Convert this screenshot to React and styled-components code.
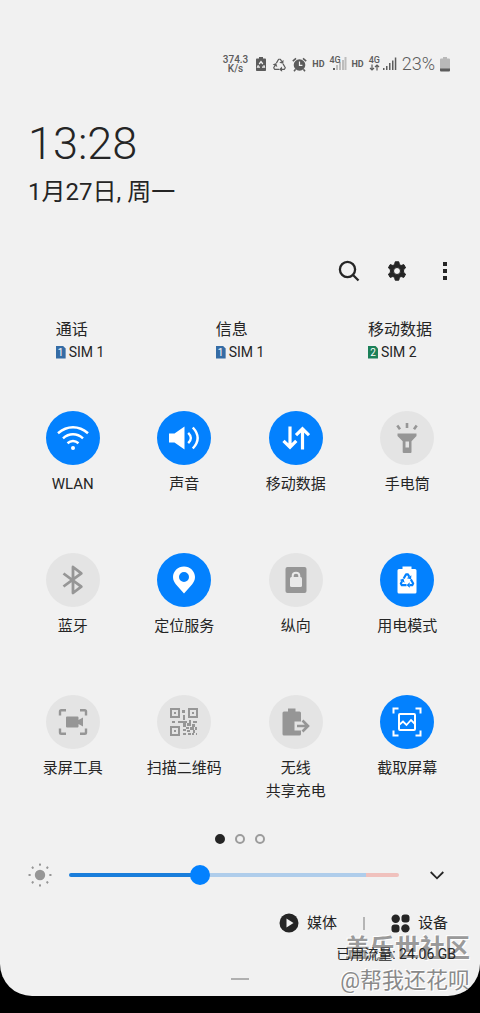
import React, { useState } from 'react';
import styled, { createGlobalStyle } from 'styled-components';

const Global = createGlobalStyle`
  * { box-sizing: border-box; }
  html, body { margin: 0; padding: 0; background: #000; }
  body {
    font-family: Roboto, "Noto Sans CJK SC", sans-serif;
    color: #252525;
  }
  button {
    border: 0; padding: 0; margin: 0; background: none;
    font: inherit; color: inherit; cursor: pointer;
  }
  svg { display: block; flex: none; }
`;

const Panel = styled.main`
  position: relative;
  display: flex;
  flex-direction: column;
  background: #f1f1f1;
  border-radius: 0 0 32px 32px;
  padding: 50px 0 16px;
  overflow: hidden;
`;

const StatusBar = styled.div`
  display: flex;
  justify-content: flex-end;
  align-items: center;
  gap: 5px;
  height: 28px;
  padding-right: 30px;
  color: #5c5c5c;
`;

const Speed = styled.div`
  padding-right: 2px;
  font-size: 10px;
  line-height: 9px;
  font-weight: 500;
  text-align: center;
`;

const Tag = styled.span`
  font-size: 9px;
  line-height: 12px;
  font-weight: 700;
`;

const Signal = styled.div`
  position: relative;
  display: flex;
  align-items: flex-end;
  width: ${p => p.$width}px;
  height: 16px;
`;

const NetType = styled.span`
  position: absolute;
  left: 0;
  top: 0;
  font-size: 9px;
  line-height: 9px;
  font-weight: 500;
`;

const Percent = styled.span`
  font-size: 18px;
  line-height: 20px;
  font-weight: 300;
`;

const Clock = styled.time`
  display: block;
  margin-top: 40px;
  padding-left: 28px;
  font-size: 45px;
  line-height: 52px;
  font-weight: 300;
`;

const DateText = styled.div`
  margin-top: 6px;
  padding-left: 28px;
  font-size: 24px;
  line-height: 32px;
`;

const Toolbar = styled.div`
  display: flex;
  justify-content: flex-end;
  gap: 16px;
  margin-top: 47px;
  padding-right: 19px;
`;

const IconButton = styled.button`
  display: flex;
  align-items: center;
  justify-content: center;
  width: ${p => p.$width || 32}px;
  height: 32px;
`;

const SimRow = styled.section`
  display: grid;
  grid-template-columns: repeat(3, 1fr);
  justify-items: center;
  margin-top: 31px;
`;

const SimTitle = styled.div`
  font-size: 16px;
  line-height: 23px;
`;

const SimName = styled.div`
  display: flex;
  align-items: center;
  gap: 3px;
  font-size: 14px;
  line-height: 22px;
`;

const SimBadge = styled.span`
  display: block;
  width: 10px;
  height: 13px;
  font-size: 10px;
  line-height: 13px;
  text-align: center;
  color: #fff;
  background: ${p => p.$color};
  clip-path: polygon(0 0, 7px 0, 100% 3px, 100% 100%, 0 100%);
`;

const Tiles = styled.section`
  display: grid;
  grid-template-columns: repeat(4, 1fr);
  row-gap: 57px;
  margin-top: 48px;
  padding: 0 17px;
`;

const Tile = styled.button`
  display: flex;
  flex-direction: column;
  align-items: center;
  gap: 8px;
  font-size: 15px;
  line-height: 23px;
  white-space: pre-line;
`;

const Disc = styled.span`
  display: flex;
  align-items: center;
  justify-content: center;
  width: 54px;
  height: 54px;
  border-radius: 50%;
  background: ${p => (p.$on ? '#0381fe' : '#e4e4e4')};
  color: ${p => (p.$on ? '#fff' : '#969696')};
`;

const Dots = styled.div`
  display: flex;
  justify-content: center;
  gap: 10px;
  margin-top: 31px;
`;

const Dot = styled.span`
  width: 10px;
  height: 10px;
  border-radius: 50%;
  border: 2px solid ${p => (p.$active ? '#252525' : '#9c9c9c')};
  background: ${p => (p.$active ? '#252525' : 'transparent')};
`;

const Brightness = styled.div`
  display: flex;
  align-items: center;
  gap: 17px;
  height: 40px;
  margin-top: 11px;
  padding: 0 22px 0 28px;
`;

const Slider = styled.input`
  appearance: none;
  flex: 1;
  min-width: 0;
  height: 20px;
  margin: 0;
  background: transparent;
  &::-webkit-slider-runnable-track {
    height: 4px;
    border-radius: 2px;
    background: linear-gradient(
      to right,
      #1a7edb 0 var(--fill),
      #afcdeb var(--fill) 90%,
      #f0c1bd 90%
    );
  }
  &::-webkit-slider-thumb {
    appearance: none;
    width: 20px;
    height: 20px;
    margin-top: -8px;
    border-radius: 50%;
    background: #0381fe;
  }
`;

const Footer = styled.div`
  display: flex;
  justify-content: flex-end;
  align-items: center;
  gap: 26px;
  height: 30px;
  margin-top: 13px;
  padding-right: 32px;
`;

const FooterButton = styled.button`
  display: flex;
  align-items: center;
  gap: 8px;
  font-size: 15px;
  line-height: 23px;
`;

const Divider = styled.span`
  width: 2px;
  height: 13px;
  background: #b5b5b5;
`;

const Usage = styled.div`
  position: relative;
  z-index: 1;
  margin-top: 6px;
  padding-right: 24px;
  font-size: 14px;
  line-height: 20px;
  text-align: right;
`;

const Handle = styled.div`
  align-self: center;
  width: 18px;
  height: 2px;
  margin-top: 14px;
  background: #b0b0b0;
`;

const Watermark = styled.div`
  position: absolute;
  right: 10px;
  bottom: 0;
  text-align: right;
  white-space: nowrap;
  pointer-events: none;
  text-shadow: -1px -1px 0 #fff, 1px 1px 0 #fff;
`;

const Forum = styled.div`
  font-size: 25px;
  line-height: 34px;
  font-weight: 700;
  color: #9a9a9a;
`;

const Author = styled.div`
  font-size: 22px;
  line-height: 30px;
  color: #8a8a8a;
`;

const Recycle = ({ size, color, width = 2.6 }) => (
  <svg width={size} height={size} viewBox="0 0 24 24">
    {[0, 120, 240].map(a => (
      <g key={a} transform={`rotate(${a} 12 13.500)`}>
        <path d="M7 9.800 10.600 3.600H13.400L15.400 7" fill="none" stroke={color} strokeWidth={width} strokeLinejoin="round" />
        <path d="M11.600 9.200 18 10.800 18.600 4.800z" fill={color} />
      </g>
    ))}
  </svg>
);

const SaverIcon = () => (
  <svg width="12" height="16" viewBox="0 0 12 16">
    <path d="M4 1h4v1.500h2.200Q11 2.500 11 3.500v10.700Q11 15 10.200 15H1.800Q1 15 1 14.200V3.500Q1 2.500 1.800 2.500H4z" fill="currentColor" />
    <path d="M4.200 8 6 5.600 7.800 8M8.800 9.200 9.400 11.200H7M5 11.200H2.600L3.400 9.200" fill="none" stroke="#f1f1f1" strokeWidth="1.300" />
  </svg>
);

const AlarmIcon = () => (
  <svg width="15" height="15" viewBox="0 0 15 15">
    <circle cx="7.500" cy="8" r="5.800" fill="currentColor" />
    <path d="M.8 4.200 4 1.300M14.200 4.200 11 1.300M3.600 12.300 2 14.200M11.400 12.300 13 14.200" stroke="currentColor" strokeWidth="1.600" />
    <path d="M7.500 4.600V8.300H10.400" fill="none" stroke="#f1f1f1" strokeWidth="1.200" />
  </svg>
);

const WeakBars = () => (
  <svg width="17" height="16" viewBox="0 0 17 16">
    <path d="M3 12h2v2H3z" fill="currentColor" />
    <path d="M6 9h2v5H6zM9 6h2v8H9zM12 4h2v10h-2zM14.500 1h2v13h-2z" fill="#bdbdbd" />
  </svg>
);

const StrongBars = () => (
  <svg width="28" height="16" viewBox="0 0 28 16">
    <path d="M3 8.500V14M1 12 3 14 5 12M8 14.500V9M6 11 8 9 10 11" fill="none" stroke="currentColor" strokeWidth="1.200" />
    <path d="M14 12h1.500v2H14zM17 10h1.500v4H17zM20 7h1.500v7H20zM23 4.500h1.500V14H23zM25.800 1.500h1.500V14h-1.500z" fill="currentColor" />
  </svg>
);

const BatteryIcon = () => (
  <svg width="10" height="15" viewBox="0 0 10 15">
    <path d="M3 0h4v1.500h2Q10 1.500 10 2.500V12H0V2.500Q0 1.500 1 1.500h2z" fill="#b9b9b9" />
    <path d="M0 11.500h10V13.500Q10 14.500 9 14.500H1Q0 14.500 0 13.500z" fill="currentColor" />
  </svg>
);

const SearchIcon = () => (
  <svg width="22" height="22" viewBox="0 0 22 22" fill="none" stroke="currentColor">
    <circle cx="9.500" cy="9.500" r="7.600" strokeWidth="2.300" />
    <path d="M15 15 20.500 20.500" strokeWidth="2.300" />
  </svg>
);

const GearIcon = () => (
  <svg width="20" height="20" viewBox="0 0 20 20">
    <path
      fill="currentColor" fillRule="evenodd" stroke="currentColor" strokeWidth="1" strokeLinejoin="round"
      d="M8.200.8h3.600l.6 2.700 1.700 1 2.700-.9 1.800 3.200-2 1.900v2.600l2 1.900-1.800 3.200-2.700-.9-1.700 1-.6 2.700H8.200l-.6-2.700-1.700-1-2.700.9-1.800-3.200 2-1.900V8.700l-2-1.900 1.800-3.200 2.700.9 1.700-1zM10 6.500a3.500 3.500 0 1 0 0 7 3.500 3.500 0 0 0 0-7z"
    />
  </svg>
);

const MoreIcon = () => (
  <svg width="4" height="18" viewBox="0 0 4 18" fill="currentColor">
    <path d="M0 0h4v4H0zM0 7h4v4H0zM0 14h4v4H0z" />
  </svg>
);

const WifiIcon = () => (
  <svg width="32" height="26" viewBox="0 0 32 26" fill="none" stroke="currentColor" strokeWidth="2.500">
    <path d="M1 8.200Q8 2.200 16 2.200T31 8.200M6 13.400Q10.500 9.300 16 9.300T26 13.400M10.500 18.200Q13 16 16 16T21.500 18.200" />
    <circle cx="16" cy="23" r="2" fill="currentColor" stroke="none" />
  </svg>
);

const SoundIcon = () => (
  <svg width="32" height="26" viewBox="0 0 32 26" fill="none" stroke="currentColor" strokeWidth="2.400">
    <path d="M1 8.500H6.500L16.500 1.500V24.500L6.500 17.500H1z" fill="currentColor" stroke="none" />
    <path d="M20.200 7.800Q25.500 13 20.200 18.200M24.800 2.500Q34.500 13 24.800 23.500" />
  </svg>
);

const DataIcon = () => (
  <svg width="28" height="24" viewBox="0 0 28 24" fill="none" stroke="currentColor" strokeWidth="3.200">
    <path d="M8 .5V21M1.500 14.800 8 21.200 14.300 14.800M20.500 23.500V3M14 9.200 20.500 2.800 27 9.200" />
  </svg>
);

const TorchIcon = () => (
  <svg width="24" height="30" viewBox="0 0 24 30">
    <path d="M2.500 10.500H21.500V13L16.500 18.200V29Q16.500 30 15.500 30H8.700Q7.700 30 7.700 29V18.200L2.500 13zM10.500 18.500V24.500H14V18.500z" fill="currentColor" fillRule="evenodd" />
    <path d="M12 0V5M2.300 2.500 5 6.200M21.700 2.500 19 6.200" stroke="currentColor" strokeWidth="2.600" />
  </svg>
);

const BluetoothIcon = () => (
  <svg width="22" height="30" viewBox="0 0 22 30" fill="none" stroke="currentColor" strokeWidth="2.800" strokeLinejoin="round">
    <path d="M1.500 8.500 19.300 21.700 11 28V2L19.300 8.300 1.500 21.500" />
  </svg>
);

const PinIcon = () => (
  <svg width="22" height="28" viewBox="0 0 22 28">
    <path d="M11 .5C5 .5 0 5.200 0 11c0 3 1.300 5.400 3 7.500L11 27.500l8-9c1.700-2.100 3-4.500 3-7.500C22 5.200 17 .5 11 .5zM11 6a5 5 0 1 1 0 10 5 5 0 0 1 0-10z" fill="currentColor" fillRule="evenodd" />
  </svg>
);

const LockIcon = () => (
  <svg width="22" height="28" viewBox="0 0 22 28">
    <rect x=".5" y="1" width="21" height="26" rx="2" fill="currentColor" />
    <rect x="5" y="11" width="12" height="10" rx="1.500" fill="#e9e9e9" />
    <path d="M7.700 12V9.800Q7.700 6.800 11 6.800T14.300 9.800V12" fill="none" stroke="#e9e9e9" strokeWidth="2" />
  </svg>
);

const PowerWrap = styled.span`
  display: grid;
  place-items: center;
  > * { grid-area: 1 / 1; }
`;

const PowerIcon = () => (
  <PowerWrap>
    <svg width="20" height="28" viewBox="0 0 20 28">
      <path d="M5.500.5H14.500V3H18Q19.500 3 19.500 4.500V26Q19.500 27.500 18 27.500H2Q.5 27.500 .5 26V4.500Q.5 3 2 3H5.500z" fill="currentColor" />
    </svg>
    <Recycle size={16} color="#0381fe" width={3.2} />
  </PowerWrap>
);

const RecordIcon = () => (
  <svg width="30" height="28" viewBox="0 0 30 28">
    <path d="M2 7.500V3.500Q2 2.200 3.300 2.200H8M22 2.200H26.700Q28 2.200 28 3.500V7.500M28 20.500V24.500Q28 25.800 26.700 25.800H22M8 25.800H3.300Q2 25.800 2 24.500V20.500" fill="none" stroke="currentColor" strokeWidth="2.400" />
    <path d="M9 8.500H19.500Q20.500 8.500 20.500 9.500V12L25 9.500V18.500L20.500 16V18.500Q20.500 19.500 19.500 19.500H9Q8 19.500 8 18.500V9.500Q8 8.500 9 8.500z" fill="currentColor" />
  </svg>
);

const QrIcon = () => (
  <svg width="28" height="28" viewBox="0 0 28 28" fill="currentColor">
    <path d="M1 1H9V9H1zM19 1H27V9H19zM1 19H9V27H1z" fill="none" stroke="currentColor" strokeWidth="2" />
    <path d="M4 4h2v2H4zM22 4h2v2h-2zM4 22h2v2H4zM12 2h3v3h-3zM13 7h2v5h-2zM2 13h3v2H2zM8 13h9v2H8zM19 12h2v3h-2zM23 13h4v2h-4zM13 15h3v4h-3zM17 15h4v3h-4zM22 16h3v3h-3zM25 19h2v3h-2zM16 19h3v2h-3zM20 19h4v3h-4zM13 21h3v2h-3zM17 22h3v2h-3zM23 22h2v3h-2zM13 25h3v2h-3zM18 25h3v2h-3zM22 25h2v2h-2zM26 25h1v2h-1z" />
  </svg>
);

const ShareIcon = () => (
  <svg width="28" height="28" viewBox="0 0 28 28">
    <path d="M6 .5H13.500V3.500H17.500Q19 3.500 19 5V13.500H12.500V22.500H19V26Q19 27.500 17.500 27.500H2Q.5 27.500 .5 26V5Q.5 3.500 2 3.500H6z" fill="currentColor" />
    <path d="M15 18H26M20.500 12.500 26 18 20.500 23.500" fill="none" stroke="currentColor" strokeWidth="2.600" />
  </svg>
);

const CaptureIcon = () => (
  <svg width="30" height="30" viewBox="0 0 30 30" fill="none" stroke="currentColor" strokeWidth="2">
    <path d="M1.500 6.500V1.500H6.500M23.500 1.500H28.500V6.500M28.500 23.500V28.500H23.500M6.500 28.500H1.500V23.500" />
    <rect x="7" y="7" width="16" height="16" rx="1" />
    <path d="M7 18 11 14.500 14.500 18 19 13 23 17" strokeWidth="1.800" />
  </svg>
);

const SunIcon = () => (
  <svg width="24" height="24" viewBox="0 0 24 24" fill="#969696">
    <circle cx="12" cy="12" r="5.200" />
    {[0, 45, 90, 135, 180, 225, 270, 315].map(a => (
      <rect key={a} x="11" y=".5" width="2" height="2.200" rx=".6" transform={`rotate(${a} 12 12)`} />
    ))}
  </svg>
);

const ChevronIcon = () => (
  <svg width="14" height="9" viewBox="0 0 14 9" fill="none" stroke="currentColor" strokeWidth="1.800">
    <path d="M.7 1 7 7.300 13.300 1" />
  </svg>
);

const PlayIcon = () => (
  <svg width="20" height="20" viewBox="0 0 20 20">
    <circle cx="10" cy="10" r="9.500" fill="currentColor" />
    <path d="M7.500 5.500 14.500 10 7.500 14.500z" fill="#f1f1f1" />
  </svg>
);

const DevicesIcon = () => (
  <svg width="19" height="19" viewBox="0 0 19 19" fill="currentColor">
    <circle cx="4.700" cy="4.700" r="4.200" />
    <rect x="10.500" y=".5" width="8" height="8" rx="3" />
    <rect x=".5" y="10.500" width="8" height="8" rx="3" />
    <circle cx="14.400" cy="14.400" r="4.200" />
  </svg>
);

const sims = [
  { title: '通话', slot: 1, color: '#356ca5' },
  { title: '信息', slot: 1, color: '#356ca5' },
  { title: '移动数据', slot: 2, color: '#1b8058' },
];

const tiles = [
  { label: 'WLAN', on: true, Icon: WifiIcon },
  { label: '声音', on: true, Icon: SoundIcon },
  { label: '移动数据', on: true, Icon: DataIcon },
  { label: '手电筒', on: false, Icon: TorchIcon },
  { label: '蓝牙', on: false, Icon: BluetoothIcon },
  { label: '定位服务', on: true, Icon: PinIcon },
  { label: '纵向', on: false, Icon: LockIcon },
  { label: '用电模式', on: true, Icon: PowerIcon },
  { label: '录屏工具', on: false, Icon: RecordIcon },
  { label: '扫描二维码', on: false, Icon: QrIcon },
  { label: '无线\n共享充电', on: false, Icon: ShareIcon },
  { label: '截取屏幕', on: true, Icon: CaptureIcon },
];

export default function App() {
  const [level, setLevel] = useState(39);
  return (
    <>
      <Global />
      <Panel>
        <StatusBar>
          <Speed>374.3<br />K/s</Speed>
          <SaverIcon />
          <Recycle size={15} color="currentColor" width={1.9} />
          <AlarmIcon />
          <Tag>HD</Tag>
          <Signal $width={17}><NetType>4G</NetType><WeakBars /></Signal>
          <Tag>HD</Tag>
          <Signal $width={28}><NetType>4G</NetType><StrongBars /></Signal>
          <Percent>23%</Percent>
          <BatteryIcon />
        </StatusBar>

        <Clock>13:28</Clock>
        <DateText>1月27日, 周一</DateText>

        <Toolbar>
          <IconButton aria-label="搜索"><SearchIcon /></IconButton>
          <IconButton aria-label="设置"><GearIcon /></IconButton>
          <IconButton aria-label="更多"><MoreIcon /></IconButton>
        </Toolbar>

        <SimRow>
          {sims.map(s => (
            <div key={s.title}>
              <SimTitle>{s.title}</SimTitle>
              <SimName><SimBadge $color={s.color}>{s.slot}</SimBadge>SIM {s.slot}</SimName>
            </div>
          ))}
        </SimRow>

        <Tiles>
          {tiles.map(({ label, on, Icon }) => (
            <Tile key={label} aria-pressed={on}>
              <Disc $on={on}><Icon /></Disc>
              <span>{label}</span>
            </Tile>
          ))}
        </Tiles>

        <Dots><Dot $active /><Dot /><Dot /></Dots>

        <Brightness>
          <SunIcon />
          <Slider
            type="range" min="0" max="100" aria-label="亮度" value={level}
            onChange={e => setLevel(Number(e.target.value))}
            style={{ '--fill': `${level}%` }}
          />
          <IconButton $width={42} aria-label="展开"><ChevronIcon /></IconButton>
        </Brightness>

        <Footer>
          <FooterButton><PlayIcon />媒体</FooterButton>
          <Divider />
          <FooterButton><DevicesIcon />设备</FooterButton>
        </Footer>
        <Usage>已用流量: 24.06 GB</Usage>
        <Handle />

        <Watermark>
          <Forum>盖乐世社区</Forum>
          <Author>@帮我还花呗</Author>
        </Watermark>
      </Panel>
    </>
  );
}
